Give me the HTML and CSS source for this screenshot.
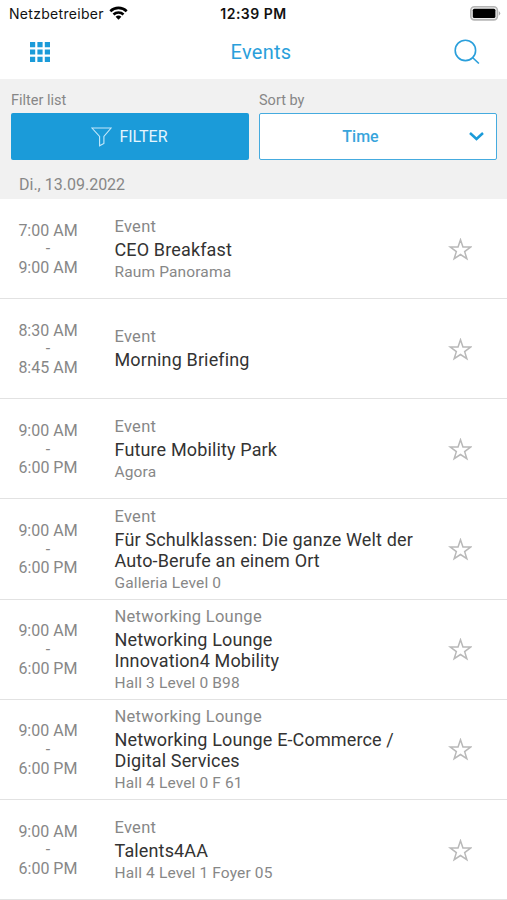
FILE: index.html
```
<!DOCTYPE html>
<html lang="de">
<head>
<meta charset="utf-8">
<title>Events</title>
<link rel="stylesheet" href="styles.css">
</head>
<body>
<svg class="symbols" aria-hidden="true">
  <symbol id="star" viewBox="0 0 24 24"><path d="M12.5 1.7l2.45 7.2h7.95l-6.25 4.7 2.2 7.1-6.35-4.2-6.35 4.2 2.2-7.1L2.1 8.9h7.95z" fill="none" stroke="#b9b9b9" stroke-width="1.5"/></symbol>
</svg>
<header>
  <div class="status">
    <div class="carrier"><span>Netzbetreiber</span>
      <svg width="19" height="14" viewBox="0 0 19 14" fill="none" stroke="#000" stroke-width="2.6"><path d="M1.3 5.2a11.8 11.8 0 0 1 16.4 0M4.5 8.5a7.2 7.2 0 0 1 10 0"/><path d="M6.6 10.8a4.2 4.2 0 0 1 5.8 0L9.5 13.7z" fill="#000" stroke="none"/></svg>
    </div>
    <div class="clock">12:39 PM</div>
    <svg class="battery" width="31" height="15" viewBox="0 0 31 15"><rect x=".8" y=".8" width="26.6" height="13.1" rx="3.6" fill="#eee" stroke="#b5b5b5" stroke-width="1.6"/><rect x="2.8" y="2.8" width="22.6" height="9.1" rx="1.5"/><path d="M28.8 4.9q2.8 2.4 0 4.8z" fill="#aaa"/></svg>
  </div>
  <nav class="bar">
    <svg width="20" height="20" viewBox="0 0 20 20" fill="#1b9bd9"><path d="M0 0h5.2v5.2H0zM7.4 0h5.2v5.2H7.4zM14.8 0H20v5.2h-5.2zM0 7.4h5.2v5.2H0zM7.4 7.4h5.2v5.2H7.4zM14.8 7.4H20v5.2h-5.2zM0 14.8h5.2V20H0zM7.4 14.8h5.2V20H7.4zM14.8 14.8H20V20h-5.2z"/></svg>
    <h1>Events</h1>
    <svg class="search" width="26" height="26" viewBox="0 0 26 26" fill="none" stroke="#2a9fdb" stroke-width="1.6"><circle cx="11.4" cy="11.4" r="10.2"/><path d="M18.5 18.5l6.4 6"/></svg>
  </nav>
</header>
<section class="controls">
  <div class="control"><label>Filter list</label>
    <button class="filter"><svg width="21" height="20" viewBox="0 0 21 20" fill="none" stroke="#c5e8fa" stroke-width="1.1"><path d="M.9 1h19.2l-7.2 8.4v7L8.6 18.8V9.4z"/></svg><span>FILTER</span></button>
  </div>
  <div class="control"><label>Sort by</label>
    <button class="sort"><span>Time</span><svg width="15" height="10" viewBox="0 0 15 10" fill="none" stroke="#1b9bd9" stroke-width="2.5"><path d="M1 1l6.5 6 6.5-6"/></svg></button>
  </div>
</section>
<h2 class="date">Di., 13.09.2022</h2>
<main>
  <article><div class="time">7:00 AM<br>-<br>9:00 AM</div><div class="info"><p class="kind">Event</p><h3>CEO Breakfast</h3><p class="place">Raum Panorama</p></div><svg class="star"><use href="#star"/></svg></article>
  <article><div class="time">8:30 AM<br>-<br>8:45 AM</div><div class="info"><p class="kind">Event</p><h3>Morning Briefing</h3><p class="place"></p></div><svg class="star"><use href="#star"/></svg></article>
  <article><div class="time">9:00 AM<br>-<br>6:00 PM</div><div class="info"><p class="kind">Event</p><h3>Future Mobility Park</h3><p class="place">Agora</p></div><svg class="star"><use href="#star"/></svg></article>
  <article><div class="time">9:00 AM<br>-<br>6:00 PM</div><div class="info"><p class="kind">Event</p><h3>Für Schulklassen: Die ganze Welt der<br>Auto-Berufe an einem Ort</h3><p class="place">Galleria Level 0</p></div><svg class="star"><use href="#star"/></svg></article>
  <article><div class="time">9:00 AM<br>-<br>6:00 PM</div><div class="info"><p class="kind">Networking Lounge</p><h3>Networking Lounge<br>Innovation4 Mobility</h3><p class="place">Hall 3 Level 0 B98</p></div><svg class="star"><use href="#star"/></svg></article>
  <article><div class="time">9:00 AM<br>-<br>6:00 PM</div><div class="info"><p class="kind">Networking Lounge</p><h3>Networking Lounge E-Commerce /<br>Digital Services</h3><p class="place">Hall 4 Level 0 F 61</p></div><svg class="star"><use href="#star"/></svg></article>
  <article><div class="time">9:00 AM<br>-<br>6:00 PM</div><div class="info"><p class="kind">Event</p><h3>Talents4AA</h3><p class="place">Hall 4 Level 1 Foyer 05</p></div><svg class="star"><use href="#star"/></svg></article>
</main>
</body>
</html>
```
FILE: styles.css
```
* { box-sizing: border-box; }
body { margin: 0; height: 900px; overflow: hidden; background: #fff; font-family: Roboto, sans-serif; color: #878787; }
h1, h2, h3, p { margin: 0; font-weight: 400; }
.symbols { display: none; }
svg { display: block; flex: none; }
header { height: 79px; }
.status { height: 27px; display: grid; grid-template-columns: 1fr auto 1fr; align-items: center; padding: 0 6px 0 9px; font-family: Inter, sans-serif; font-size: 14px; color: #111; }
.carrier { display: flex; align-items: center; gap: 5px; letter-spacing: .3px; }
.carrier svg { margin-top: -2px; }
.clock { font-weight: 600; letter-spacing: .5px; margin-left: -3px; }
.battery { justify-self: end; }
.bar { height: 50px; display: grid; grid-template-columns: 1fr auto 1fr; align-items: center; padding: 0 27px 0 30px; }
h1 { font-size: 20px; letter-spacing: .3px; color: #2a9fdb; padding-left: 12px; margin-top: -1px; }
.search { justify-self: end; }
.controls { height: 90px; background: #f1f1f1; padding: 11px 10px 0 11px; display: grid; grid-template-columns: 1fr 1fr; gap: 10px; }
label { display: block; font-size: 14.5px; line-height: 20px; padding-top: 1px; margin-bottom: 2px; }
button { width: 100%; height: 47px; border-radius: 2px; display: flex; align-items: center; justify-content: center; font: 16px Roboto, sans-serif; padding: 0; }
.filter { background: #1b9bd9; border: 0; color: #e4f5fe; gap: 7px; padding-right: 1px; }
.sort { background: #fff; border: 1.5px solid #45abdf; color: #38a5dc; font-weight: 500; padding-right: 12px; letter-spacing: 0; }
.sort span { flex: 1; padding-right: 8px; }
.date { height: 30px; background: #f1f1f1; padding-left: 19px; font-size: 16px; line-height: 31px; }
article { height: 100.17px; display: grid; grid-template-columns: 96px 1fr 24px; align-items: center; padding: 0 35px 0 0; border-bottom: 1px solid #e2e2e2; }
.time { text-align: center; font-size: 16px; line-height: 18.6px; padding-top: 2px; }
.info { padding: 1px 0 0 18.5px; white-space: nowrap; }
.kind { font-size: 16.5px; line-height: 25.7px; letter-spacing: .28px; }
h3 { font-size: 18px; line-height: 21.3px; letter-spacing: .14px; color: #333; margin: -.8px 0 .8px; }
.place { font-size: 15.5px; line-height: 23.3px; min-height: 4px; letter-spacing: .14px; }
.star { width: 24px; height: 24px; margin-top: 2px; }
```
